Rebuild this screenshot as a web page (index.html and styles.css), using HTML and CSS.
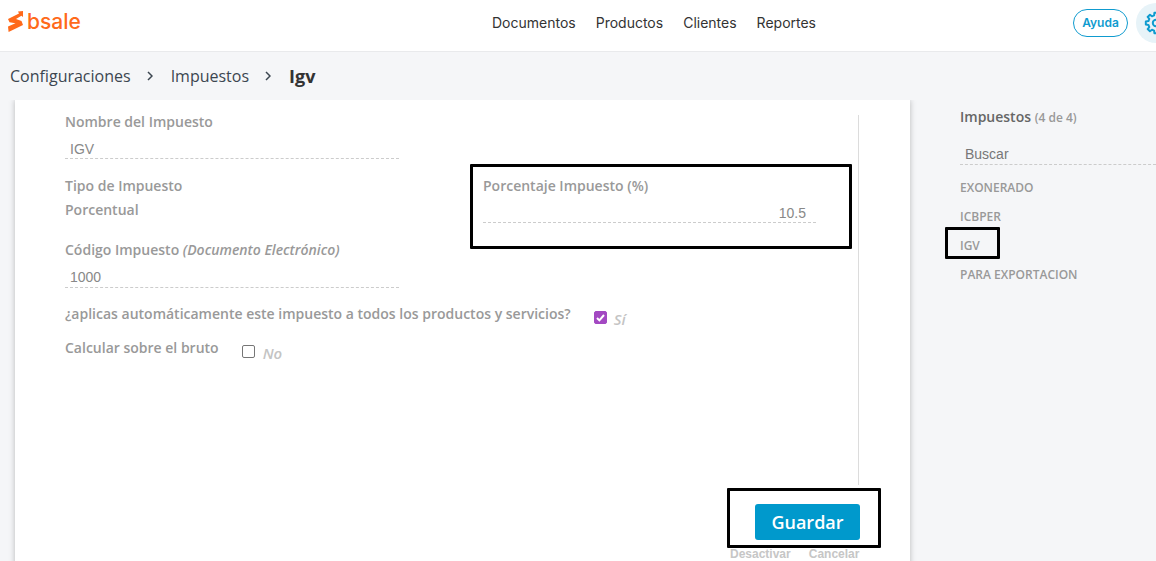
FILE: index.html
```html
<!DOCTYPE html>
<html lang="es">
<head>
<meta charset="utf-8">
<title>Igv</title>
<link rel="stylesheet" href="styles.css">
</head>
<body>
<header class="topbar">
  <a class="logo">
    <svg class="logo-mark" width="15" height="21" viewBox="0 0 15 21"><path d="M0 8 L11 2.4 L10 0.4 L15 0 L15 6 L13.4 4.8 L8 8 L13.5 10 L15 14 L0.6 21 L0 15.6 L7.5 12.2 L1.5 11.2 Z" fill="#ff6a1a"/></svg>
    <span class="logo-text">bsale</span>
  </a>
  <nav class="nav">
    <a>Documentos</a><a>Productos</a><a>Clientes</a><a>Reportes</a>
  </nav>
  <div class="top-actions">
    <a class="help">Ayuda</a>
    <span class="gear">
      <svg width="24" height="24" viewBox="-12 -12 24 24" fill="none" stroke="#0f9bcf" stroke-width="2" stroke-linejoin="round"><circle r="3.2"/><polygon points="7.57,-1.89 10.17,-1.61 10.17,1.61 7.57,1.89 6.69,4.02 8.33,6.05 6.05,8.33 4.02,6.69 1.89,7.57 1.61,10.17 -1.61,10.17 -1.89,7.57 -4.02,6.69 -6.05,8.33 -8.33,6.05 -6.69,4.02 -7.57,1.89 -10.17,1.61 -10.17,-1.61 -7.57,-1.89 -6.69,-4.02 -8.33,-6.05 -6.05,-8.33 -4.02,-6.69 -1.89,-7.57 -1.61,-10.17 1.61,-10.17 1.89,-7.57 4.02,-6.69 6.05,-8.33 8.33,-6.05 6.69,-4.02"/></svg>
    </span>
  </div>
</header>

<div class="crumbs">
  <span>Configuraciones</span>
  <svg class="sep" width="6" height="10" viewBox="0 0 6 10"><path d="M1 1 L5 5 L1 9" fill="none" stroke="#3c4650" stroke-width="1.5"/></svg>
  <span>Impuestos</span>
  <svg class="sep" width="6" height="10" viewBox="0 0 6 10"><path d="M1 1 L5 5 L1 9" fill="none" stroke="#3c4650" stroke-width="1.5"/></svg>
  <strong>Igv</strong>
</div>

<main class="content">
  <section class="card">
    <div class="form">
      <div class="form-columns">
        <div class="col-left">
          <label class="label">Nombre del Impuesto</label>
          <div class="field">IGV</div>
          <label class="label label-tipo">Tipo de Impuesto</label>
          <div class="label static">Porcentual</div>
          <label class="label label-codigo">Código Impuesto <em>(Documento Electrónico)</em></label>
          <div class="field field-code">1000</div>
        </div>
        <div class="col-right">
          <label class="label">Porcentaje Impuesto (%)</label>
          <div class="field field-num">10.5</div>
        </div>
      </div>
      <div class="check-row row-auto">
        <span class="label">¿aplicas automáticamente este impuesto a todos los productos y servicios?</span>
        <span class="box box-on">
          <svg width="9" height="8" viewBox="0 0 9 8"><path d="M1 4 L3.4 6.4 L8 1" fill="none" stroke="#fff" stroke-width="2"/></svg>
        </span>
        <em class="check-text">Sí</em>
      </div>
      <div class="check-row row-bruto">
        <span class="label">Calcular sobre el bruto</span>
        <span class="box"></span>
        <em class="check-text">No</em>
      </div>
    </div>
    <div class="actions">
      <button class="save">Guardar</button>
      <div class="links"><a>Desactivar</a><a>Cancelar</a></div>
    </div>
  </section>

  <aside class="side">
    <h2 class="side-title">Impuestos <small>(4 de 4)</small></h2>
    <div class="search">Buscar</div>
    <ul class="side-list">
      <li>EXONERADO</li>
      <li>ICBPER</li>
      <li>IGV</li>
      <li>PARA EXPORTACION</li>
    </ul>
  </aside>
</main>

<div class="mark mark-pct"></div>
<div class="mark mark-igv"></div>
<div class="mark mark-save"></div>
</body>
</html>
```

FILE: styles.css
```css
* { box-sizing: border-box; }
html, body { height: 100%; }
body {
  margin: 0;
  overflow: hidden;
  background: #f5f6f8;
  font-family: "Open Sans", sans-serif;
  position: relative;
}
.topbar {
  height: 52px;
  background: #fff;
  border-bottom: 1px solid #e9eaec;
  display: flex;
  align-items: center;
  padding-left: 8px;
  position: relative;
}
.logo { display: flex; align-items: center; gap: 4px; width: 484px; margin-top: -8px; }
.logo-text {
  font-family: "Inter", sans-serif;
  font-size: 21px;
  font-weight: 500;
  color: #ff6a1a;
  line-height: 22px;
}
.nav { display: flex; gap: 20px; margin-top: -6px; }
.nav a { font-family: "Inter", sans-serif; font-size: 14px; color: #333; line-height: 20px; }
.top-actions { margin-left: auto; display: flex; align-items: center; gap: 8px; margin-right: -20px; margin-top: -6px; }
.help {
  width: 55px;
  height: 28px;
  border: 1px solid #0f9bcf;
  border-radius: 14px;
  color: #0f9bcf;
  font-family: "Inter", sans-serif;
  font-weight: 600;
  font-size: 12px;
  display: flex;
  align-items: center;
  justify-content: center;
}
.gear {
  width: 40px;
  height: 40px;
  border-radius: 50%;
  background: #e7f3f8;
  display: flex;
  align-items: center;
  justify-content: center;
}
.crumbs {
  height: 48px;
  display: flex;
  align-items: center;
  padding-left: 10px;
  font-size: 16px;
  color: #3c4650;
  padding-bottom: 1px;
}
.crumbs .sep { margin: 0 18px 0 16px; }
.crumbs strong { font-size: 18px; font-weight: 700; color: #333; }
.content { display: flex; align-items: flex-start; }
.card {
  width: 895px;
  height: 520px;
  margin-left: 15px;
  background: #fff;
  box-shadow: 0 0 6px rgba(0,0,0,.25);
  clip-path: inset(0 -10px 0 -10px);
  padding: 15px 51px 0 50px;
  position: relative;
}
.form {
  height: 370px;
  border-right: 1px solid #dcdcdc;
}
.form-columns { display: flex; }
.col-left { width: 334px; }
.col-right { width: 333px; margin-left: 84px; padding-top: 64px; }
.label {
  display: block;
  font-size: 14px;
  font-weight: 600;
  color: #999;
  line-height: 14px;
}
.label em { font-size: 14px; font-weight: 600; }
.field {
  height: 24px;
  margin-top: 6px;
  padding: 6px 5px 0;
  border-bottom: 1px dashed #ccc;
  font-family: "Liberation Sans", sans-serif;
  font-size: 14px;
  line-height: 16px;
  color: #888;
}
.field-code { margin-top: 7px; padding-top: 5px; }
.field-num { text-align: right; padding-right: 10px; }
.label-tipo { margin-top: 20px; }
.static { margin-top: 10px; }
.label-codigo { margin-top: 26px; }
.check-row { display: flex; }
.row-auto { margin-top: 19px; }
.row-bruto { margin-top: 13px; }
.box {
  width: 13px;
  height: 13px;
  border-radius: 2px;
  border: 1px solid #767676;
  background: #fff;
  margin-top: 4px;
  display: flex;
  align-items: center;
  justify-content: center;
}
.row-auto .box { margin-left: 23px; }
.row-bruto .box { margin-left: 23px; }
.box-on { background: #a349c2; border-color: #a349c2; }
.check-text { font-size: 15px; font-weight: 600; color: #c4c4c4; margin: 3px 0 0 7px; line-height: 18px; }
.row-bruto .check-text { margin: 3px 0 0 8px; }
.actions {
  position: absolute;
  left: 740px;
  top: 404px;
  width: 105px;
}
.save {
  display: block;
  width: 105px;
  height: 36px;
  border: 0;
  border-radius: 3px;
  background: #0099cc;
  color: #fff;
  font-family: "Open Sans", sans-serif;
  font-size: 18px;
  font-weight: 600;
}
.links {
  display: flex;
  gap: 18px;
  margin: 7px 0 0 -25px;
  width: 140px;
  font-family: "Liberation Sans", sans-serif;
  font-size: 12px;
  font-weight: 700;
  color: #c6c6c6;
  white-space: nowrap;
}
.side { margin-left: 50px; padding-top: 8px; width: 196px; flex: none; }
.side-title { margin: 0; font-size: 14px; font-weight: 600; color: #666; line-height: 18px; }
.side-title small { font-size: 12px; color: #999; font-weight: 600; }
.search {
  margin-top: 15px;
  height: 23px;
  padding: 4px 5px 0;
  border-bottom: 1px dashed #ccc;
  font-family: "Liberation Sans", sans-serif;
  font-size: 14px;
  line-height: 16px;
  color: #777;
}
.side-list { list-style: none; margin: 8px 0 0; padding: 0; }
.side-list li { font-size: 12px; font-weight: 600; color: #999; line-height: 29px; }
.mark { position: absolute; border: 3px solid #000; border-radius: 1px; }
.mark-pct { left: 470px; top: 164px; width: 382px; height: 85px; }
.mark-igv { left: 945px; top: 227px; width: 55px; height: 32px; }
.mark-save { left: 727px; top: 488px; width: 154px; height: 60px; }
```
